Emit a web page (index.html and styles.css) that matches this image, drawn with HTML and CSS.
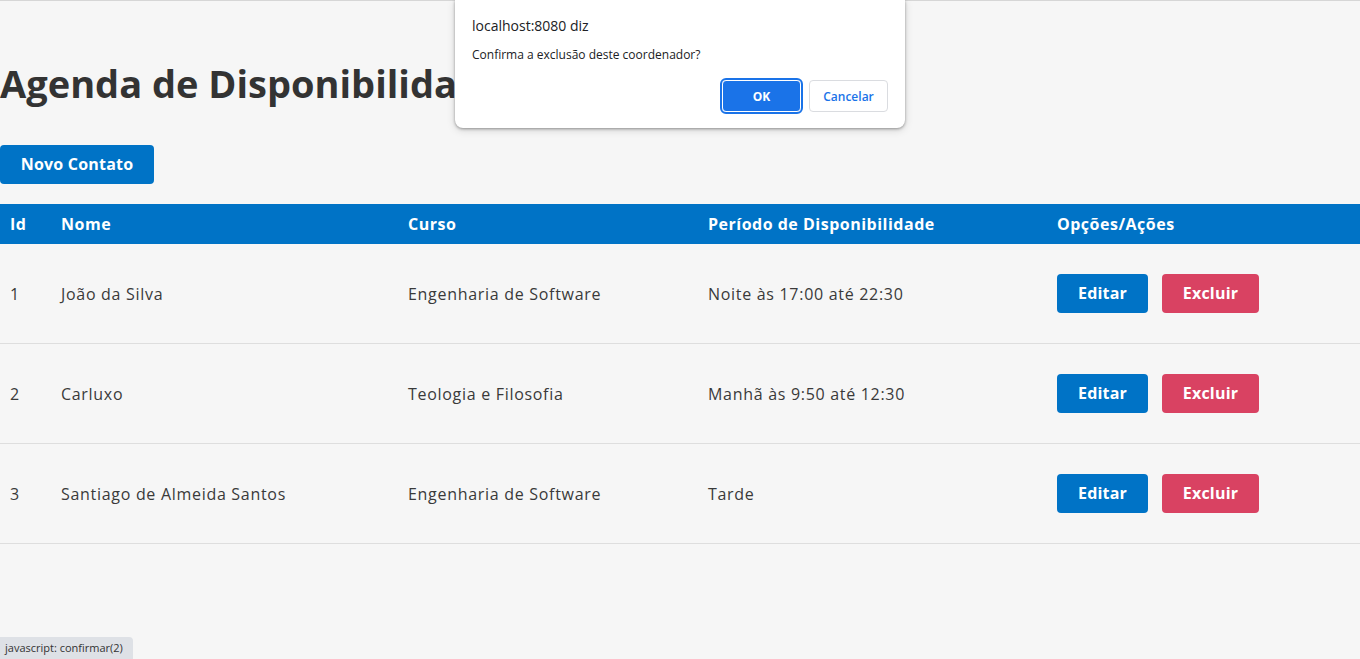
FILE: index.html
```html
<!DOCTYPE html>
<html lang="pt-BR">
<head>
<meta charset="utf-8">
<title>Agenda de Disponibilidade</title>
<link rel="stylesheet" href="styles.css">
</head>
<body>
<main class="page">
  <h1 class="title">Agenda de Disponibilidade</h1>
  <a class="btn btn-primary btn-new" href="#">Novo Contato</a>
  <table class="agenda">
    <colgroup>
      <col class="c-id"><col class="c-nome"><col class="c-curso"><col class="c-periodo"><col class="c-acoes">
    </colgroup>
    <thead>
      <tr><th>Id</th><th>Nome</th><th>Curso</th><th>Período de Disponibilidade</th><th>Opções/Ações</th></tr>
    </thead>
    <tbody>
      <tr>
        <td>1</td><td>João da Silva</td><td>Engenharia de Software</td><td>Noite às 17:00 até 22:30</td>
        <td><div class="actions"><a class="btn btn-primary btn-edit" href="#">Editar</a><a class="btn btn-danger btn-del" href="#">Excluir</a></div></td>
      </tr>
      <tr>
        <td>2</td><td>Carluxo</td><td>Teologia e Filosofia</td><td>Manhã às 9:50 até 12:30</td>
        <td><div class="actions"><a class="btn btn-primary btn-edit" href="#">Editar</a><a class="btn btn-danger btn-del" href="#">Excluir</a></div></td>
      </tr>
      <tr>
        <td>3</td><td>Santiago de Almeida Santos</td><td>Engenharia de Software</td><td>Tarde</td>
        <td><div class="actions"><a class="btn btn-primary btn-edit" href="#">Editar</a><a class="btn btn-danger btn-del" href="#">Excluir</a></div></td>
      </tr>
    </tbody>
  </table>
</main>

<div class="dialog" role="dialog">
  <div class="dialog-title">localhost:8080 diz</div>
  <div class="dialog-msg">Confirma a exclusão deste coordenador?</div>
  <div class="dialog-buttons">
    <button class="dbtn dbtn-ok">OK</button>
    <button class="dbtn dbtn-cancel">Cancelar</button>
  </div>
</div>

<div class="statusbar">javascript: confirmar(2)</div>
</body>
</html>
```

FILE: styles.css
```css
html, body {
  margin: 0;
  padding: 0;
  background: #f6f6f6;
  height: 100%;
}
body {
  font-family: "Open Sans", "DejaVu Sans", sans-serif;
  color: #333;
  border-top: 1px solid #d6d6d6;
  box-sizing: border-box;
  overflow: hidden;
}
.page {
  padding-top: 52px;
}
.title {
  margin: 0;
  font-size: 38px;
  line-height: 60px;
  font-weight: 700;
  color: #333;
  letter-spacing: 0;
}
.btn {
  display: inline-block;
  text-decoration: none;
  color: #fff;
  font-weight: 700;
  font-size: 16px;
  border-radius: 4px;
  height: 39px;
  line-height: 39px;
  text-align: center;
  box-sizing: border-box;
  letter-spacing: 0.2px;
}
.btn-primary { background: #0073c6; }
.btn-danger { background: #d94262; }
.btn-new {
  margin-top: 32px;
  width: 154px;
}
.agenda {
  margin-top: 20px;
  width: 100%;
  border-collapse: collapse;
  table-layout: fixed;
  font-size: 16px;
}
.c-id { width: 51px; }
.c-nome { width: 347px; }
.c-curso { width: 300px; }
.c-periodo { width: 349px; }
.agenda th {
  background: #0073c6;
  color: #fff;
  text-align: left;
  font-weight: 700;
  height: 40px;
  padding: 0 0 0 10px;
  letter-spacing: 0.5px;
}
.agenda td {
  height: 99px;
  padding: 0 0 0 10px;
  border-bottom: 1px solid #dedede;
  color: #3a3a3a;
  font-weight: 400;
  letter-spacing: 0.7px;
}
.actions {
  display: flex;
  gap: 14px;
  letter-spacing: 0.2px;
}
.btn-edit { width: 91px; }
.btn-del { width: 97px; }

.dialog {
  position: absolute;
  top: 0;
  left: 455px;
  width: 450px;
  height: 128px;
  box-sizing: border-box;
  background: #fff;
  border-radius: 0 0 8px 8px;
  box-shadow: 0 1px 3px rgba(0,0,0,0.35), 0 2px 8px rgba(0,0,0,0.15);
  padding: 17px 17px 0 17px;
  font-family: "Open Sans", "Noto Sans", sans-serif;
  color: #202124;
}
.dialog-title {
  font-size: 14px;
  line-height: 18px;
}
.dialog-msg {
  margin-top: 12px;
  font-size: 12px;
  line-height: 16px;
}
.dialog-buttons {
  display: flex;
  justify-content: flex-end;
  gap: 8px;
  margin-top: 17px;
}
.dbtn {
  width: 79px;
  height: 32px;
  border-radius: 4px;
  font-family: "Open Sans", "Noto Sans", sans-serif;
  font-size: 12px;
  box-sizing: border-box;
}
.dbtn-ok {
  background: #1a73e8;
  color: #fff;
  font-weight: 700;
  border: 1px solid #fff;
  outline: 2px solid #1a73e8;
  outline-offset: 0;
}
.dbtn-cancel {
  background: #fff;
  color: #1a73e8;
  font-weight: 600;
  border: 1px solid #dadce0;
}
.statusbar {
  position: fixed;
  left: 0;
  bottom: 0;
  height: 22px;
  line-height: 22px;
  padding: 0 10px 0 5px;
  background: #dee1e6;
  border-top-right-radius: 4px;
  font-family: "Open Sans", sans-serif;
  font-size: 11px;
  color: #333;
}
```
